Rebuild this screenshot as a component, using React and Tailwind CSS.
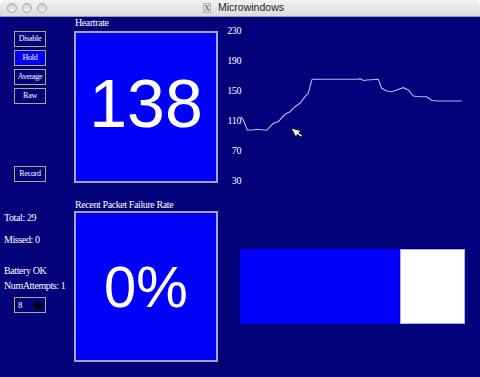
import React from "react";

const serif = { fontFamily: '"Liberation Serif", "Times New Roman", serif' };

const points = [
  [240, 115.7], [243.3, 120], [247.3, 130], [253.3, 130], [256, 129.3], [266.7, 130.3],
  [273.3, 123.3], [278.3, 121.7], [285, 114.3], [290, 111.7], [295, 106.7], [300, 103.3],
  [305, 96.7], [308.3, 93.3], [311.7, 80], [313.3, 79.3], [358.3, 79.3], [360, 78.7],
  [364, 80.7], [366.7, 80], [378.3, 79.3], [381.7, 88.3], [386.7, 91], [391.7, 91.7],
  [396.7, 90], [403.3, 87.7], [408.3, 90], [413.3, 96], [420, 96.7], [426.7, 96.7],
  [431.7, 100.3], [436.7, 101], [461.7, 101],
];

// small bitmap-ish button from the left panel
const Btn = ({ label, active }) => (
  <div
    className={`w-[32px] h-[16px] border border-[#b4a97a] flex items-center justify-center text-[8px] leading-none text-white tracking-[-0.3px] ${
      active ? "bg-[#0000fa]" : "bg-[#02027a]"
    }`}
    style={serif}
  >
    {label}
  </div>
);

const App = () => {
  return (
    <div className="w-[480px] h-[377px] bg-white overflow-hidden">
      {/* title bar */}
      <div className="h-[17px] rounded-t-[5px] bg-gradient-to-b from-[#f2f2f2] to-[#dcdcdc] border-b border-[#9a9ac8] flex items-center relative">
        <div className="flex gap-[5px] pl-[7px]">
          {[0, 1, 2].map((i) => (
            <div
              key={i}
              className="w-[10px] h-[10px] rounded-full border border-[#a6a6a6] bg-gradient-to-b from-[#d0d0d0] to-[#f4f4f4]"
            />
          ))}
        </div>
        <div className="flex-1 flex justify-center items-center gap-[7px] pr-[40px]">
          <span
            className="w-[8px] h-[10px] bg-[#e6e6e6] border border-[#b0b0b0] text-[8px] leading-[9px] text-[#444] flex justify-center"
            style={serif}
          >
            X
          </span>
          <span
            className="text-[10.5px] text-[#222]"
            style={{ fontFamily: '"Liberation Sans", Arial, sans-serif' }}
          >
            Microwindows
          </span>
        </div>
      </div>

      {/* body */}
      <div className="h-[360px] bg-[#02027a] flex text-white" style={serif}>
        {/* left column */}
        <div className="w-[74px] pl-[4px] pt-[14px] flex flex-col text-[10px] leading-[12px] tracking-[-0.4px]">
          <div className="ml-[10px] flex flex-col gap-[3px]">
            <Btn label="Disable" />
            <Btn label="Hold" active />
            <Btn label="Average" />
            <Btn label="Raw" />
          </div>
          <div className="ml-[10px] mt-[62px]">
            <Btn label="Record" />
          </div>
          <div className="mt-[30px]">Total: 29</div>
          <div className="mt-[10px]">Missed: 0</div>
          <div className="mt-[19px]">Battery OK</div>
          <div className="mt-[3px]">NumAttempts: 1</div>
          <div className="ml-[10px] mt-[5px] w-[32px] h-[16px] border border-[#b4a97a] flex items-center justify-between pl-[3px] pr-[4px]">
            <span className="text-[9px]">8</span>
            <span className="w-[7px] h-[7px] bg-black rotate-45 rounded-[1px]" />
          </div>
        </div>

        {/* middle column */}
        <div className="w-[144px] flex flex-col">
          <div className="h-[14px] pl-[1px] text-[10px] leading-[11px] tracking-[-0.4px]">Heartrate</div>
          <div
            className="h-[152px] bg-[#0000fa] border-2 border-[#a4a4cc] flex items-center justify-center pb-[8px] text-[68px] leading-none"
            style={{ fontFamily: '"Liberation Sans", Arial, sans-serif' }}
          >
            138
          </div>
          <div className="h-[28px] pl-[1px] flex items-end text-[10px] leading-[13px] tracking-[-0.4px]">
            Recent Packet Failure Rate
          </div>
          <div
            className="h-[151px] bg-[#0000fa] border-2 border-[#a4a4cc] flex items-center justify-center text-[58px] leading-none"
            style={{ fontFamily: '"Liberation Sans", Arial, sans-serif' }}
          >
            0%
          </div>
        </div>

        {/* right column */}
        <div className="flex-1 flex flex-col">
          <div className="flex h-[180px]">
            <div className="w-[23px] -mt-[1px] flex flex-col items-end text-[10px] leading-[30px] tracking-[-0.4px]">
              {["230", "190", "150", "110", "70", "30"].map((v) => (
                <span key={v}>{v}</span>
              ))}
            </div>
            <svg width="239" height="180" viewBox="241 17 239 180">
              <polyline
                points={points.map((p) => p.join(",")).join(" ")}
                fill="none"
                stroke="#b8b8f4"
                strokeWidth="1.1"
              />
              <path
                d="M291 128 L291 139 L293.6 136.6 L295.6 141 L297.6 140 L295.6 135.8 L299 135.6 Z"
                fill="white"
                stroke="black"
                strokeWidth="0.8"
                transform="rotate(-28 291 128)"
              />
            </svg>
          </div>
          <div className="ml-[22px] mt-[52px] w-[225px] h-[75px] flex">
            <div className="w-[160px] bg-[#0000fa]" />
            <div className="flex-1 bg-white border border-[#b0b0e8]" />
          </div>
        </div>
      </div>
    </div>
  );
};

export default App;
